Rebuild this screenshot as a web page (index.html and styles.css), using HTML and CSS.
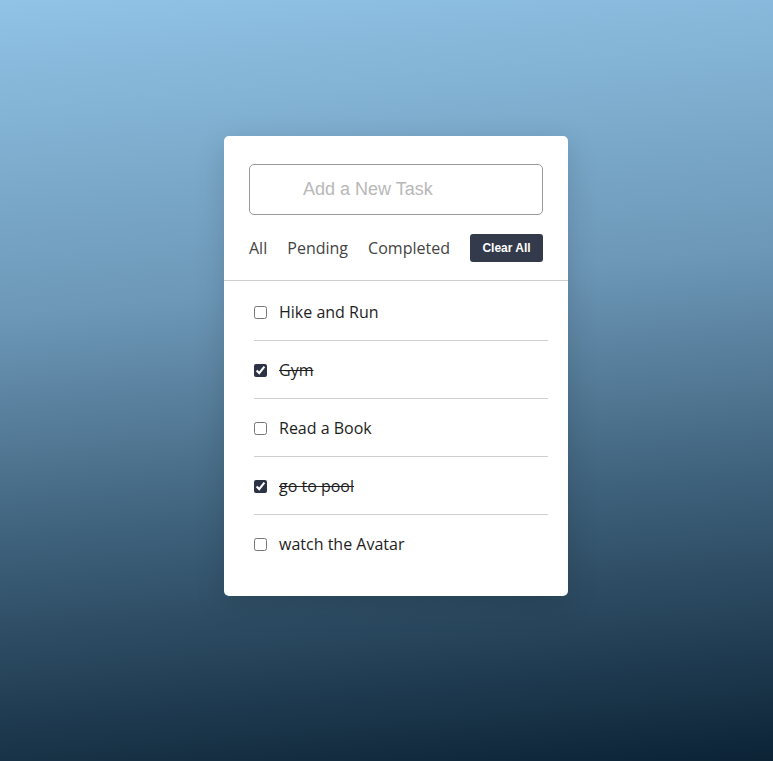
FILE: index.html
```html
<!DOCTYPE html>
<html>
<head>
<meta charset="utf-8">
<link rel="stylesheet" href="styles.css">
</head>
<body>
<div class="page">
  <div class="card">
    <div class="top">
      <input class="task-input" type="text" placeholder="Add a New Task">
      <div class="filters">
        <span class="filter">All</span>
        <span class="filter">Pending</span>
        <span class="filter">Completed</span>
        <button class="clear">Clear All</button>
      </div>
    </div>
    <ul class="tasks">
      <li class="task"><input type="checkbox"><span>Hike and Run</span></li>
      <li class="task done"><input type="checkbox" checked><span>Gym</span></li>
      <li class="task"><input type="checkbox"><span>Read a Book</span></li>
      <li class="task done"><input type="checkbox" checked><span>go to pool</span></li>
      <li class="task"><input type="checkbox"><span>watch the Avatar</span></li>
    </ul>
  </div>
</div>
</body>
</html>
```

FILE: styles.css
```css
html, body {
  margin: 0;
  height: 100%;
}
body {
  background: linear-gradient(175deg, #90c3e6 0%, #6d98b8 38%, #3f627c 65%, #0c2336 100%);
  font-family: "Open Sans", sans-serif;
}
.page {
  padding: 136px 0 0 224px;
}
.card {
  width: 344px;
  background: #fff;
  border-radius: 5px;
  box-shadow: 0 8px 30px rgba(0, 0, 0, 0.15);
}
.top {
  padding: 28px 25px 18px;
  border-bottom: 1px solid #cfcfcf;
}
.task-input {
  box-sizing: border-box;
  display: block;
  width: 294px;
  height: 51px;
  border: 1px solid #9a9a9a;
  border-radius: 5px;
  padding: 0 0 0 53px;
  font-family: "Liberation Sans", Arial, sans-serif;
  font-size: 18px;
  color: #333;
  outline: none;
}
.task-input::placeholder {
  color: #b8b8b8;
}
.filters {
  margin-top: 19px;
  display: flex;
  align-items: center;
  justify-content: space-between;
  height: 28px;
}
.filter {
  font-size: 16px;
  color: #444;
}
.clear {
  width: 73px;
  height: 28px;
  border: none;
  border-radius: 3px;
  background: #333a4b;
  color: #fff;
  font-family: "Liberation Sans", Arial, sans-serif;
  font-weight: bold;
  font-size: 12px;
  padding: 0;
}
.tasks {
  list-style: none;
  margin: 0;
  padding: 2px 20px 24px 30px;
}
.task {
  display: flex;
  align-items: center;
  height: 57px;
  border-bottom: 1px solid #cfcfcf;
  font-size: 16px;
  color: #1e1e1e;
}
.task:last-child {
  border-bottom: none;
}
.task input {
  width: 13px;
  height: 13px;
  margin: 2px 12px 0 0;
  accent-color: #2b3345;
}
.task.done span {
  text-decoration: line-through;
}
```
